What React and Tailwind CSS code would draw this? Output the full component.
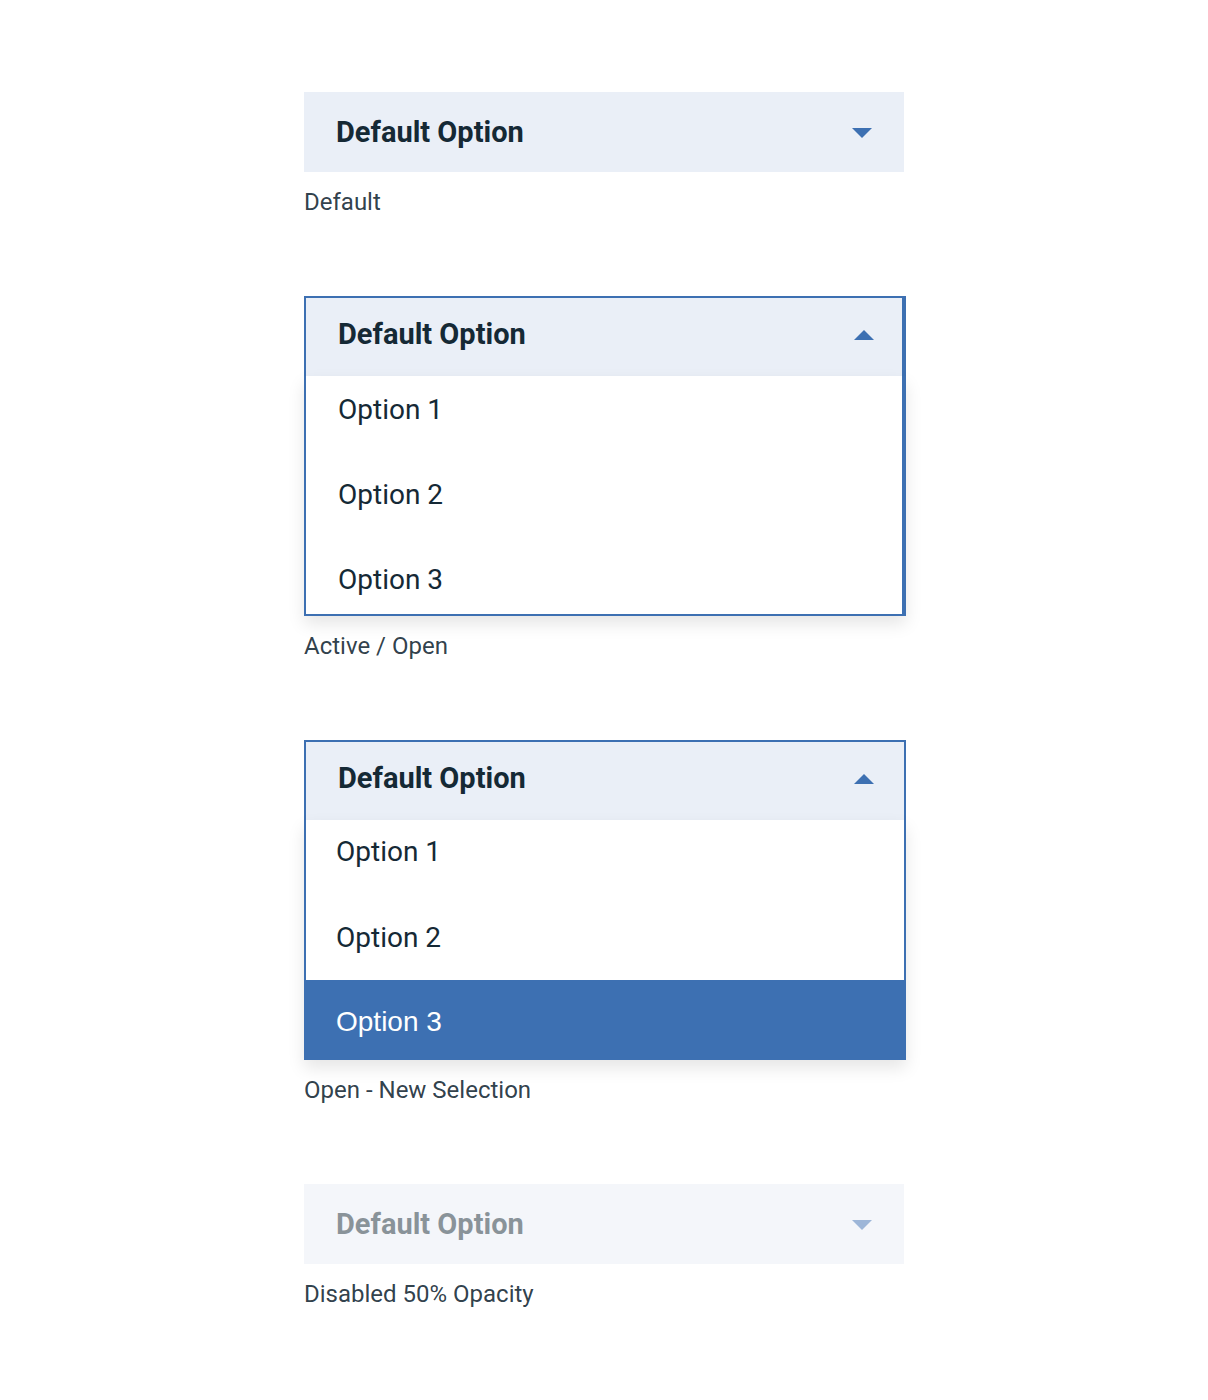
import { useState } from "react";

function Arrow({ up = false }) {
  return (
    <svg
      viewBox="0 0 20 10"
      aria-hidden="true"
      className={`pointer-events-none col-start-1 row-start-1 h-[10px] w-5 justify-self-end fill-[#3d70b2] ${up ? "mr-7" : "mr-8"}`}
    >
      <path d={up ? "M0 10 10 0l10 10Z" : "M0 0h20L10 10Z"} />
    </svg>
  );
}

function Field({ id, options, open = false, disabled = false, value, onChange, className = "" }) {
  return (
    <div className={`grid items-center bg-[#eaeff7] ${open ? "pb-1" : "pt-[2px]"} ${disabled ? "opacity-50" : ""} ${className}`}>
      <select
        id={id}
        disabled={disabled}
        value={value}
        onChange={onChange}
        className={`col-start-1 row-start-1 w-full appearance-none rounded-none bg-transparent pr-16 pl-8 text-[29px] font-bold text-[#152935] opacity-100 outline-none ${open ? "h-[74px]" : "h-[78px]"}`}
      >
        <option>Default Option</option>
        {options.map((o) => (
          <option key={o}>{o}</option>
        ))}
      </select>
      <Arrow up={open} />
    </div>
  );
}

function Example({ id, caption, children }) {
  return (
    <section>
      {children}
      <label htmlFor={id} className="block pt-3 text-2xl leading-9 text-[#152935]/90">
        {caption}
      </label>
    </section>
  );
}

const OPTIONS = ["Option 1", "Option 2", "Option 3"];
const optionText = "block w-full text-left text-[28px] leading-9";

export default function App() {
  const [value, setValue] = useState("Default Option");
  const change = (e) => setValue(e.target.value);

  return (
    <main className="flex flex-col items-center bg-white px-6 pt-[92px] pb-[88px] font-[Roboto,sans-serif] text-[#152935]">
      <div className="flex w-full max-w-[600px] flex-col gap-[76px]">
        <Example id="default" caption="Default">
          <Field id="default" options={OPTIONS} value={value} onChange={change} />
        </Example>

        <Example id="active" caption="Active / Open">
          <div className="-mr-[2px]">
            <Field
              id="active"
              options={OPTIONS}
              open
              value={value}
              onChange={change}
              className="border-2 border-r-4 border-b-0 border-[#3d70b2]"
            />
            <div
              role="listbox"
              aria-label="Active options"
              className="flex flex-col gap-[49px] border-2 border-t-0 border-r-4 border-[#3d70b2] bg-white px-8 pt-4 pb-4 shadow-[0_8px_16px_rgba(0,0,0,0.1)]"
            >
              {OPTIONS.map((o) => (
                <button key={o} type="button" role="option" aria-selected="false" className={optionText}>
                  {o}
                </button>
              ))}
            </div>
          </div>
        </Example>

        <Example id="selection" caption="Open - New Selection">
          <div className="-mr-[2px]">
            <Field
              id="selection"
              options={OPTIONS}
              open
              value={value}
              onChange={change}
              className="border-2 border-b-0 border-[#3d70b2] pr-[2px]"
            />
            <div
              role="listbox"
              aria-label="Selection options"
              className="border-x-2 border-[#3d70b2] bg-white shadow-[0_8px_16px_rgba(0,0,0,0.1)]"
            >
              <div role="presentation" className="flex flex-col gap-[50px] px-[30px] pt-[14px] pb-6">
                {OPTIONS.slice(0, 2).map((o) => (
                  <button key={o} type="button" role="option" aria-selected="false" className={optionText}>
                    {o}
                  </button>
                ))}
              </div>
              <button
                type="button"
                role="option"
                aria-selected="true"
                className="block h-20 w-full bg-[#3d70b2] px-[30px] pt-1 text-left font-['Liberation_Sans',sans-serif] text-[28px] text-white"
              >
                Option 3
              </button>
            </div>
          </div>
        </Example>

        <Example id="disabled" caption="Disabled 50% Opacity">
          <Field id="disabled" options={OPTIONS} disabled value="Default Option" />
        </Example>
      </div>
    </main>
  );
}
